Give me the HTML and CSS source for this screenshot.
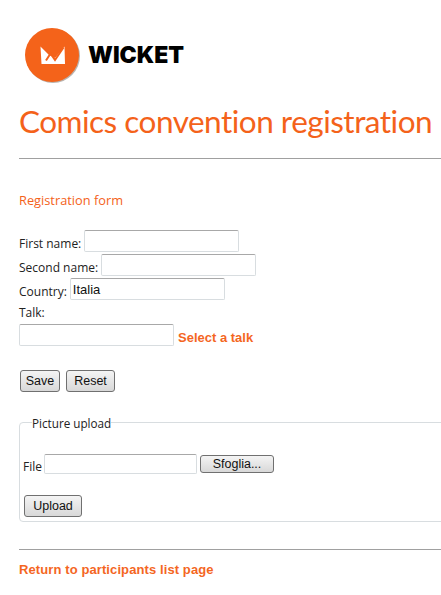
FILE: index.html
```html
<!DOCTYPE html>
<html lang="en">
  <head>
    <meta charset="UTF-8" />
    <title>Comics convention registration</title>
    <link rel="stylesheet" href="styles.css">
  </head>
  <body>
    <div class="page">
      <div class="logo">
        <svg class="logo-mark" width="60" height="60" viewBox="0 0 60 60">
          <circle cx="28" cy="28" r="27" fill="#8a8078" opacity="0.6"></circle>
          <circle cx="27" cy="27" r="27" fill="#f4631a"></circle>
          <path d="M15.5 18.5 L24 27 L30 30 L39.5 18.5 L40 36 L16.5 36 Z" fill="#fff"></path>
          <path d="M21 32.5 L25.5 25.5 L30 32 L38.5 19.5" fill="none" stroke="#f4631a" stroke-width="2"></path>
        </svg>
        <span class="logo-text">WICKET</span>
      </div>

      <h1>Comics convention registration</h1>
      <hr class="rule-top">

      <h2>Registration form</h2>

      <form class="reg-form">
        <div class="row"><label>First name:</label> <input type="text"></div>
        <div class="row"><label>Second name:</label> <input type="text"></div>
        <div class="row"><label>Country:</label> <input type="text" value="Italia"></div>
        <div class="row talk-label"><label>Talk:</label></div>
        <div class="row talk-row"><input type="text"> <a href="#" class="link talk-link">Select a talk</a></div>
        <div class="buttons">
          <button type="button" class="btn-save">Save</button>
          <button type="button" class="btn-reset">Reset</button>
        </div>
      </form>

      <fieldset class="upload">
        <legend>Picture upload</legend>
        <div class="file-row">
          <label>File</label>
          <input type="text">
          <button type="button" class="browse">Sfoglia...</button>
        </div>
        <button type="button" class="btn-upload">Upload</button>
      </fieldset>

      <hr class="rule-bottom">
      <a href="#" class="link return-link">Return to participants list page</a>
    </div>
  </body>
</html>
```

FILE: styles.css
```css
html, body {
  margin: 0;
  overflow: hidden;
  background: #fff;
}

body {
  font-family: "Open Sans", "Noto Sans", sans-serif;
  font-size: 12px;
  color: #222;
}

.page {
  width: 700px;
  padding: 28px 0 0 19px;
}

.logo {
  display: flex;
  align-items: flex-start;
  height: 58px;
  padding-left: 6px;
}

.logo-mark {
  flex: none;
}

.logo-text {
  margin: 13px 0 0 3px;
  font-family: Inter, sans-serif;
  font-weight: 900;
  font-size: 23px;
  line-height: 28px;
  color: #000;
}

h1 {
  margin: 15px 0 0;
  font-family: Lato, sans-serif;
  font-size: 31.5px;
  line-height: 40px;
  letter-spacing: -0.5px;
  font-variant-ligatures: none;
  font-weight: normal;
  color: #f4621a;
}

hr {
  height: 1px;
  margin: 0;
  border: none;
  background: #a0a0a0;
}

.rule-top {
  margin-top: 17px;
}

h2 {
  margin: 31px 0 0;
  font-size: 12.8px;
  line-height: 20px;
  font-weight: normal;
  color: #f4621a;
}

.reg-form {
  margin-top: 19px;
}

.row {
  display: flex;
  align-items: center;
  gap: 3px;
  height: 24px;
}

.row label,
.file-row label {
  padding-top: 6px;
  line-height: 16px;
}

.talk-label {
  height: 22px;
}

.row.talk-label label {
  padding-top: 2px;
}

.talk-row {
  gap: 4px;
}

.row input {
  height: 22px;
}

input {
  box-sizing: border-box;
  width: 155px;
  height: 22px;
  margin: 0;
  padding: 0 2px;
  border: 1px solid #d8dde0;
  border-top-color: #a8a8a8;
  border-radius: 2px;
  font-family: "Liberation Sans", sans-serif;
  font-size: 13px;
  color: #111;
}

.link {
  font-family: "Liberation Sans", sans-serif;
  font-size: 13px;
  font-weight: bold;
  color: #f4661f;
  text-decoration: none;
}

.talk-link {
  padding-top: 5px;
}

.return-link {
  letter-spacing: 0.1px;
}

.buttons {
  display: flex;
  gap: 6px;
  margin: 23px 0 0 1px;
}

button {
  box-sizing: border-box;
  height: 22px;
  padding: 0;
  border: 1px solid #707070;
  border-radius: 3px;
  background: linear-gradient(#f4f4f4, #d8d8d8);
  font-family: "Liberation Sans", sans-serif;
  font-size: 12.5px;
  color: #111;
}

.btn-save {
  width: 40px;
}

.btn-reset {
  width: 49px;
}

.btn-upload {
  width: 58px;
  margin-left: 1px;
}

.upload {
  box-sizing: border-box;
  height: 110px;
  margin: 20px 0 0;
  padding: 0 0 0 3px;
  border: 1px solid #d8dde0;
  border-radius: 4px;
}

.upload legend {
  margin-left: 9px;
  padding: 2px 0 0;
  font-size: 11.7px;
  line-height: 18px;
}

.file-row {
  display: flex;
  align-items: center;
  gap: 2px;
  height: 20px;
  margin: 22px 0 21px;
}

.file-row input {
  width: 153px;
  height: 20px;
}

.browse {
  height: 18px;
  width: 74px;
  margin-left: 1px;
}

.rule-bottom {
  margin: 27px 0 11px;
}
```
